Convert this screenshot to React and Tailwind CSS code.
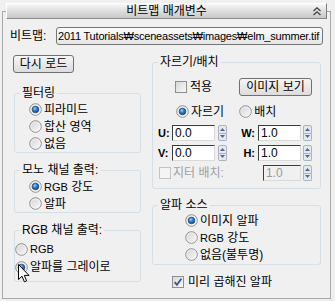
import React from 'react';

// Win7-style radio button
function Radio({ checked }) {
  return (
    <svg width="13" height="13" viewBox="0 0 13 13" className="shrink-0">
      <circle cx="6.5" cy="6.5" r="5.8" fill="url(#radioBg)" stroke="#8f8f8f" strokeWidth="1" />
      <circle cx="6.5" cy="6.5" r="4.6" fill="none" stroke="#ffffff" strokeOpacity="0.6" strokeWidth="0.8" />
      {checked && <circle cx="6.5" cy="6.5" r="3.3" fill="url(#radioDot)" stroke="#19407a" strokeWidth="0.7" />}
    </svg>
  );
}

function Check({ checked, disabled }) {
  return (
    <svg width="12" height="12" viewBox="0 0 12 12" className="shrink-0">
      <rect x="0.5" y="0.5" width="11" height="11" fill={disabled ? '#f4f4f4' : 'url(#checkBg)'} stroke={disabled ? '#c4c4c4' : '#8f8f8f'} />
      {checked && <path d="M2.6 6.2 L4.9 8.8 L9.4 2.8" fill="none" stroke="#3557a0" strokeWidth="1.8" />}
    </svg>
  );
}

function Spinner() {
  return (
    <div className="flex flex-col w-[9px] h-[16px] shrink-0">
      <div className="flex-1 flex items-center justify-center border border-[#a9b3c0] rounded-t-[2px] bg-[#e4e9ef]">
        <svg width="5" height="3" viewBox="0 0 5 3"><path d="M2.5 0 L5 3 L0 3 Z" fill="#55698c" /></svg>
      </div>
      <div className="flex-1 flex items-center justify-center border border-t-0 border-[#a9b3c0] rounded-b-[2px] bg-[#e4e9ef]">
        <svg width="5" height="3" viewBox="0 0 5 3"><path d="M0 0 L5 0 L2.5 3 Z" fill="#55698c" /></svg>
      </div>
    </div>
  );
}

function NumField({ value, className, disabled }) {
  return (
    <div
      className={`h-[16px] shrink-0 border border-t-[#3c3c3c] border-l-[#3c3c3c] border-r-[#dadada] border-b-[#dadada] pl-[2px] text-[12px] leading-[14px] ${
        disabled ? 'bg-[#f0f0f0] text-[#9a9a9a]' : 'bg-white text-black'
      } ${className}`}
    >
      {value}
    </div>
  );
}

function Group({ title, className, children }) {
  return (
    <fieldset className={`border border-[#d5dfe5] rounded-[3px] ${className}`}>
      <legend className="ml-[5px] px-[2px] text-[12px] leading-[14px]">{title}</legend>
      {children}
    </fieldset>
  );
}

function RadioRow({ checked, children, className }) {
  return (
    <div className={`flex items-center gap-[2px] h-[17px] ${className}`}>
      <Radio checked={checked} />
      <span className="leading-[14px]">{children}</span>
    </div>
  );
}

const btn =
  'flex items-center justify-center border border-[#707070] rounded-[3px] bg-gradient-to-b from-[#f6f6f6] to-[#dcdcdc] text-[12px] leading-[14px]';

export default function App() {
  return (
    <div className="relative w-[335px] h-[301px] overflow-hidden bg-[#f0f0f0] text-black text-[12px] font-[Liberation_Sans,Noto_Sans_CJK_KR,sans-serif]">
      {/* shared gradients */}
      <svg width="0" height="0" className="absolute">
        <defs>
          <linearGradient id="radioBg" x1="0" y1="0" x2="1" y2="1">
            <stop offset="0" stopColor="#d2d2d2" />
            <stop offset="1" stopColor="#fbfbfb" />
          </linearGradient>
          <radialGradient id="radioDot" cx="0.4" cy="0.35" r="0.7">
            <stop offset="0" stopColor="#9fd3ff" />
            <stop offset="0.45" stopColor="#2f7fcf" />
            <stop offset="1" stopColor="#123f78" />
          </radialGradient>
          <linearGradient id="checkBg" x1="0" y1="0" x2="1" y2="1">
            <stop offset="0" stopColor="#d6d6d6" />
            <stop offset="1" stopColor="#fafafa" />
          </linearGradient>
        </defs>
      </svg>

      {/* rollout header */}
      <div className="pt-[3px] pl-[6px]">
        <div className="relative z-10 flex items-center justify-center w-[321px] h-[16px] border border-t-white border-l-white border-r-[#7c7c7c] border-b-[#8a8a8a] bg-gradient-to-b from-[#f8f8f8] via-[#dedede] to-[#c8c8c8]">
          <span className="leading-[14px]">비트맵 매개변수</span>
          <svg width="8" height="9" viewBox="0 0 8 9" className="absolute right-[5px] top-[3px]">
            <path d="M0.5 4 L4 0.8 L7.5 4 M0.5 8 L4 4.8 L7.5 8" fill="none" stroke="#444" strokeWidth="1.3" />
          </svg>
        </div>
      </div>

      {/* rollout frame */}
      <div className="ml-[2px] -mt-[8px] w-[329px] h-[288px] border border-[#a7a7a7] pt-[15px]">
        <div className="flex items-center h-[18px] pl-[7px]">
          <span className="w-[46px] leading-[14px]">비트맵:</span>
          <div className="flex items-center w-[267px] h-[18px] overflow-hidden whitespace-nowrap border border-[#767676] rounded-[3px] bg-gradient-to-b from-[#fbfbfb] to-[#e6e6e6] pl-[1px] text-[11px] leading-[13px] tracking-[-0.2px]">
            2011 Tutorials₩sceneassets₩images₩elm_summer.tif
          </div>
        </div>

        <div className="flex gap-[11px] pl-[10px] mt-[10px]">
          {/* left column */}
          <div className="w-[128px] flex flex-col">
            <div className={`${btn} w-[61px] h-[18px]`}>다시 로드</div>

            <Group title="필터링" className="ml-[1px] mt-[13px] pt-[1px]">
              <RadioRow checked className="pl-[14px]">피라미드</RadioRow>
              <RadioRow className="pl-[14px]">합산 영역</RadioRow>
              <RadioRow className="pl-[14px]">없음</RadioRow>
            </Group>

            <Group title="모노 채널 출력:" className="ml-[1px] mt-[10px] pt-[1px]">
              <RadioRow checked className="pl-[14px]"><span className="text-[11px]">RGB</span> 강도</RadioRow>
              <RadioRow className="pl-[14px]">알파</RadioRow>
            </Group>

            <Group title="RGB 채널 출력:" className="ml-[1px] mt-[10px] pt-[3px] pb-[5px]">
              <div className="flex items-center gap-[2px] h-[18px]">
                <Radio />
                <span className="text-[11px] leading-[13px]">RGB</span>
              </div>
              <div className="flex items-center gap-[2px] h-[18px]">
                <Radio checked />
                <span className="leading-[14px]">알파를 그레이로</span>
              </div>
            </Group>
          </div>

          {/* right column */}
          <div className="w-[169px] flex flex-col">
            <Group title="자르기/배치" className="pt-[9px] pb-[7px]">
              <div className="flex items-center h-[18px] pl-[22px] pr-[8px]">
                <Check />
                <span className="ml-[3px] leading-[14px]">적용</span>
                <div className={`${btn} ml-auto w-[73px] h-[18px]`}>이미지 보기</div>
              </div>
              <div className="flex items-center h-[17px] mt-[7px] pl-[23px]">
                <RadioRow checked>자르기</RadioRow>
                <RadioRow className="ml-[15px]">배치</RadioRow>
              </div>
              <div className="flex items-center h-[16px] mt-[5px] pl-[5px]">
                <span className="w-[14px] text-[11px] font-bold leading-[13px]">U:</span>
                <NumField value="0.0" className="w-[43px]" />
                <div className="ml-[3px]"><Spinner /></div>
                <span className="w-[31px] pr-[3px] text-right text-[11px] font-bold leading-[13px]">W:</span>
                <NumField value="1.0" className="w-[43px]" />
                <div className="ml-[2px]"><Spinner /></div>
              </div>
              <div className="flex items-center h-[16px] mt-[4px] pl-[5px]">
                <span className="w-[14px] text-[11px] font-bold leading-[13px]">V:</span>
                <NumField value="0.0" className="w-[43px]" />
                <div className="ml-[3px]"><Spinner /></div>
                <span className="w-[31px] pr-[3px] text-right text-[11px] font-bold leading-[13px]">H:</span>
                <NumField value="1.0" className="w-[43px]" />
                <div className="ml-[2px]"><Spinner /></div>
              </div>
              <div className="flex items-center h-[16px] mt-[4px] pl-[6px] pr-[8px]">
                <Check disabled />
                <span className="ml-[2px] leading-[14px] text-[#a0a0a0]">지터 배치:</span>
                <NumField value="1.0" disabled className="ml-auto w-[38px]" />
                <div className="ml-[2px]"><Spinner /></div>
              </div>
            </Group>

            <Group title="알파 소스" className="mt-[9px] pb-[1px]">
              <RadioRow checked className="pl-[32px]">이미지 알파</RadioRow>
              <RadioRow className="pl-[32px]"><span className="text-[11px]">RGB</span> 강도</RadioRow>
              <RadioRow className="pl-[32px]">없음(불투명)</RadioRow>
            </Group>

            <div className="flex items-center h-[13px] mt-[10px] pl-[20px]">
              <Check checked />
              <span className="ml-[4px] leading-[14px]">미리 곱해진 알파</span>
            </div>
          </div>
        </div>
      </div>

      {/* mouse pointer */}
      <svg width="12" height="19" viewBox="0 0 12 19" className="absolute left-[18px] top-[264px]">
        <path d="M0.5 0.5 L0.5 15.5 L4 12.2 L6.4 17.8 L8.6 16.9 L6.3 11.4 L11 11.4 Z" fill="#fff" stroke="#000" strokeWidth="1" strokeLinejoin="miter" />
      </svg>
    </div>
  );
}
